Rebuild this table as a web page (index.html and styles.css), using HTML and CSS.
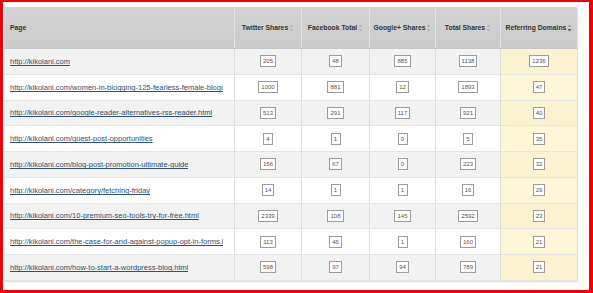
FILE: index.html
```html
<!DOCTYPE html>
<html>
<head>
<meta charset="utf-8">
<link rel="stylesheet" href="styles.css">
</head>
<body>
<div class="frame">
  <div class="table">
    <div class="row head">
      <div class="cell page">Page</div>
      <div class="cell">Twitter Shares<svg class="sort" viewBox="0 0 5 9"><path d="M2.5 0.5L4.5 3.5H0.5Z"/><path d="M2.5 8.5L4.5 5.5H0.5Z"/></svg></div>
      <div class="cell">Facebook Total<svg class="sort" viewBox="0 0 5 9"><path d="M2.5 0.5L4.5 3.5H0.5Z"/><path d="M2.5 8.5L4.5 5.5H0.5Z"/></svg></div>
      <div class="cell">Google+ Shares<svg class="sort" viewBox="0 0 5 9"><path d="M2.5 0.5L4.5 3.5H0.5Z"/><path d="M2.5 8.5L4.5 5.5H0.5Z"/></svg></div>
      <div class="cell">Total Shares<svg class="sort" viewBox="0 0 5 9"><path d="M2.5 0.5L4.5 3.5H0.5Z"/><path d="M2.5 8.5L4.5 5.5H0.5Z"/></svg></div>
      <div class="cell ref">Referring Domains<svg class="sort active" viewBox="0 0 5 9"><path class="up" d="M2.5 0.5L4.5 3.5H0.5Z"/><path d="M2.5 8.5L4.5 5.5H0.5Z"/></svg></div>
    </div>

    <div class="row odd">
      <div class="cell page"><a href="#">http://kikolani.com</a></div>
      <div class="cell"><span class="num">205</span></div>
      <div class="cell"><span class="num">48</span></div>
      <div class="cell"><span class="num">885</span></div>
      <div class="cell"><span class="num">1138</span></div>
      <div class="cell ref"><span class="num">1236</span></div>
    </div>
    <div class="row">
      <div class="cell page"><a href="#">http://kikolani.com/women-in-blogging-125-fearless-female-bloggers.html</a></div>
      <div class="cell"><span class="num">1000</span></div>
      <div class="cell"><span class="num">881</span></div>
      <div class="cell"><span class="num">12</span></div>
      <div class="cell"><span class="num">1893</span></div>
      <div class="cell ref"><span class="num">47</span></div>
    </div>
    <div class="row odd">
      <div class="cell page"><a href="#">http://kikolani.com/google-reader-alternatives-rss-reader.html</a></div>
      <div class="cell"><span class="num">513</span></div>
      <div class="cell"><span class="num">291</span></div>
      <div class="cell"><span class="num">117</span></div>
      <div class="cell"><span class="num">921</span></div>
      <div class="cell ref"><span class="num">40</span></div>
    </div>
    <div class="row">
      <div class="cell page"><a href="#">http://kikolani.com/guest-post-opportunities</a></div>
      <div class="cell"><span class="num">4</span></div>
      <div class="cell"><span class="num">1</span></div>
      <div class="cell"><span class="num">0</span></div>
      <div class="cell"><span class="num">5</span></div>
      <div class="cell ref"><span class="num">35</span></div>
    </div>
    <div class="row odd">
      <div class="cell page"><a href="#">http://kikolani.com/blog-post-promotion-ultimate-guide</a></div>
      <div class="cell"><span class="num">156</span></div>
      <div class="cell"><span class="num">67</span></div>
      <div class="cell"><span class="num">0</span></div>
      <div class="cell"><span class="num">223</span></div>
      <div class="cell ref"><span class="num">32</span></div>
    </div>
    <div class="row">
      <div class="cell page"><a href="#">http://kikolani.com/category/fetching-friday</a></div>
      <div class="cell"><span class="num">14</span></div>
      <div class="cell"><span class="num">1</span></div>
      <div class="cell"><span class="num">1</span></div>
      <div class="cell"><span class="num">16</span></div>
      <div class="cell ref"><span class="num">29</span></div>
    </div>
    <div class="row odd">
      <div class="cell page"><a href="#">http://kikolani.com/10-premium-seo-tools-try-for-free.html</a></div>
      <div class="cell"><span class="num">2339</span></div>
      <div class="cell"><span class="num">108</span></div>
      <div class="cell"><span class="num">145</span></div>
      <div class="cell"><span class="num">2592</span></div>
      <div class="cell ref"><span class="num">23</span></div>
    </div>
    <div class="row">
      <div class="cell page"><a href="#">http://kikolani.com/the-case-for-and-against-popup-opt-in-forms.html</a></div>
      <div class="cell"><span class="num">113</span></div>
      <div class="cell"><span class="num">46</span></div>
      <div class="cell"><span class="num">1</span></div>
      <div class="cell"><span class="num">160</span></div>
      <div class="cell ref"><span class="num">21</span></div>
    </div>
    <div class="row odd">
      <div class="cell page"><a href="#">http://kikolani.com/how-to-start-a-wordpress-blog.html</a></div>
      <div class="cell"><span class="num">598</span></div>
      <div class="cell"><span class="num">97</span></div>
      <div class="cell"><span class="num">94</span></div>
      <div class="cell"><span class="num">789</span></div>
      <div class="cell ref"><span class="num">21</span></div>
    </div>
  </div>
</div>
</body>
</html>
```

FILE: styles.css
```css
html, body {
  margin: 0;
  padding: 0;
  background: #fff;
}

.frame {
  box-sizing: border-box;
  width: 593px;
  height: 293px;
  border-style: solid;
  border-color: #f00000;
  border-width: 2px 4px 3px 3px;
  padding: 5px 0 0 1px;
  font-family: "Liberation Sans", Arial, sans-serif;
}

.table {
  width: 573px;
  box-shadow: 1px 1px 1px rgba(0, 0, 0, 0.12);
}

.row {
  display: grid;
  grid-template-columns: 231px 67px 68px 66px 65px 76px;
  height: 25.75px;
  box-sizing: border-box;
  border-bottom: 1px solid #e4e4e4;
  background: #fff;
}

.row.odd {
  background: #f2f2f2;
}

.row.head {
  height: 42px;
  background: linear-gradient(#d4d4d4, #cbcbcb);
  border-bottom: 1px solid #c6c6c6;
}

.cell {
  display: flex;
  align-items: center;
  justify-content: center;
  border-right: 1px solid #dedede;
  min-width: 0;
  overflow: hidden;
}

.cell.page {
  justify-content: flex-start;
  padding: 0 11px 0 6px;
}

.cell.ref {
  border-right: none;
  background: #fdf7d8;
}

.row.odd .cell.ref {
  background: #fbf3d0;
}

.head .cell {
  font-size: 6.8px;
  font-weight: bold;
  color: #333;
  white-space: nowrap;
  border-right: 1px solid #e3e3e3;
}

.head .cell.ref {
  background: transparent;
  border-right: none;
}

.sort {
  width: 5px;
  height: 8px;
  margin-left: 1px;
  fill: #b3b3b3;
  flex: none;
}

.sort.active {
  fill: #555;
}

.sort.active .up {
  fill: #9a9a9a;
}

.page a {
  font-size: 7.5px;
  color: #30506f;
  text-decoration: underline;
  text-decoration-skip-ink: none;
  white-space: nowrap;
  overflow: hidden;
  display: block;
}

.num {
  display: inline-block;
  border: 1px solid #9c9c9c;
  background: #fff;
  color: #555;
  font-size: 6px;
  line-height: 8px;
  padding: 1px 2px;
  min-width: 4px;
  text-align: center;
}
```
